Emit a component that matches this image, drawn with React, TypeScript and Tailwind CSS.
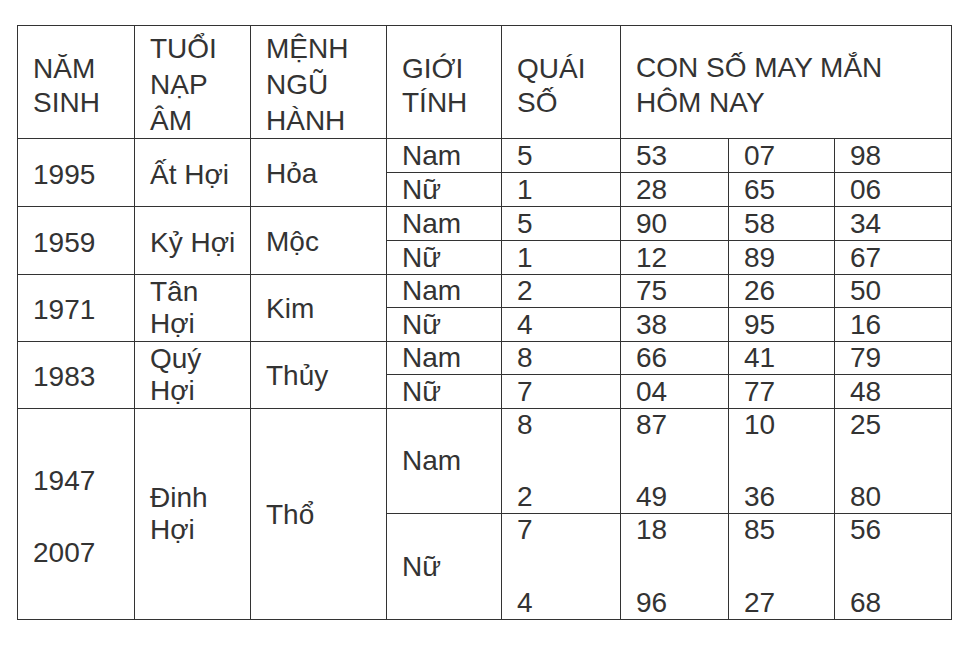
import React from 'react';

type Row = {
  gender: string;
  quai: string[];
  nums: string[][];
};

type Group = {
  years: string[];
  tuoi: string;
  menh: string;
  rows: Row[];
  tall?: boolean;
};

const groups: Group[] = [
  {
    years: ['1995'],
    tuoi: 'Ất Hợi',
    menh: 'Hỏa',
    rows: [
      { gender: 'Nam', quai: ['5'], nums: [['53'], ['07'], ['98']] },
      { gender: 'Nữ', quai: ['1'], nums: [['28'], ['65'], ['06']] },
    ],
  },
  {
    years: ['1959'],
    tuoi: 'Kỷ Hợi',
    menh: 'Mộc',
    rows: [
      { gender: 'Nam', quai: ['5'], nums: [['90'], ['58'], ['34']] },
      { gender: 'Nữ', quai: ['1'], nums: [['12'], ['89'], ['67']] },
    ],
  },
  {
    years: ['1971'],
    tuoi: 'Tân Hợi',
    menh: 'Kim',
    rows: [
      { gender: 'Nam', quai: ['2'], nums: [['75'], ['26'], ['50']] },
      { gender: 'Nữ', quai: ['4'], nums: [['38'], ['95'], ['16']] },
    ],
  },
  {
    years: ['1983'],
    tuoi: 'Quý Hợi',
    menh: 'Thủy',
    rows: [
      { gender: 'Nam', quai: ['8'], nums: [['66'], ['41'], ['79']] },
      { gender: 'Nữ', quai: ['7'], nums: [['04'], ['77'], ['48']] },
    ],
  },
  {
    years: ['1947', '2007'],
    tuoi: 'Đinh Hợi',
    menh: 'Thổ',
    tall: true,
    rows: [
      { gender: 'Nam', quai: ['8', '2'], nums: [['87', '49'], ['10', '36'], ['25', '80']] },
      { gender: 'Nữ', quai: ['7', '4'], nums: [['18', '96'], ['85', '27'], ['56', '68']] },
    ],
  },
];

const cell = 'bg-white px-[15px] leading-[32px]';

function Stack({ items }: { items: string[] }) {
  if (items.length === 1) {
    return <div className={`${cell} flex items-center`}>{items[0]}</div>;
  }
  return (
    <div className={`${cell} flex flex-col justify-between`}>
      {items.map((v, i) => (
        <span key={i}>{v}</span>
      ))}
    </div>
  );
}

// header cells: 3-line ones keep 36px leading, 2-line ones sit a bit tighter
const headers = [
  { text: 'NĂM SINH', cls: 'pt-[8px] leading-[34px]' },
  { text: 'TUỔI NẠP ÂM', cls: 'pt-[5px] leading-[36px]' },
  { text: 'MỆNH NGŨ HÀNH', cls: 'pt-[5px] leading-[36px]' },
  { text: 'GIỚI TÍNH', cls: 'pt-[8px] leading-[34px]' },
  { text: 'QUÁI SỐ', cls: 'pt-[8px] leading-[34px]' },
];

export default function App() {
  return (
    <div className="min-h-[649px] w-[977px] bg-white pl-[17px] pt-[25px] font-['Liberation_Sans',Arial,sans-serif] text-[28px] text-[#333]">
      <div className="grid w-fit grid-cols-[116px_115px_135px_114px_118px_107px_105px_116px] grid-rows-[112px_33px_33px_33px_33px_32px_33px_32px_33px_104px_105px] gap-px bg-[#333] p-px">
        {headers.map((h) => (
          <div key={h.text} className={`flex items-center bg-white pl-[15px] pr-[8px] ${h.cls}`}>
            {h.text}
          </div>
        ))}
        <div className="col-span-3 flex items-center bg-white pl-[15px] pr-[8px] pt-[5px] leading-[35px]">
          CON SỐ MAY MẮN HÔM NAY
        </div>

        {groups.map((g) => (
          <React.Fragment key={g.years.join()}>
            {g.tall ? (
              <div className={`${cell} row-span-2 flex flex-col justify-center gap-[40px] pt-[5px]`}>
                {g.years.map((y) => (
                  <span key={y}>{y}</span>
                ))}
              </div>
            ) : (
              <div className={`${cell} row-span-2 flex items-center pt-[4px]`}>{g.years[0]}</div>
            )}
            <div
              className={`row-span-2 flex items-center bg-white pl-[15px] pr-[8px] leading-[32px] ${
                g.tuoi.length > 6 ? '' : 'pt-[4px]'
              }`}
            >
              {g.tuoi}
            </div>
            <div className={`${cell} row-span-2 flex items-center pt-[2px]`}>{g.menh}</div>
            {g.rows.map((r) => (
              <React.Fragment key={r.gender}>
                <div className={`${cell} flex items-center`}>{r.gender}</div>
                <Stack items={r.quai} />
                {r.nums.map((n, i) => (
                  <Stack key={i} items={n} />
                ))}
              </React.Fragment>
            ))}
          </React.Fragment>
        ))}
      </div>
    </div>
  );
}
